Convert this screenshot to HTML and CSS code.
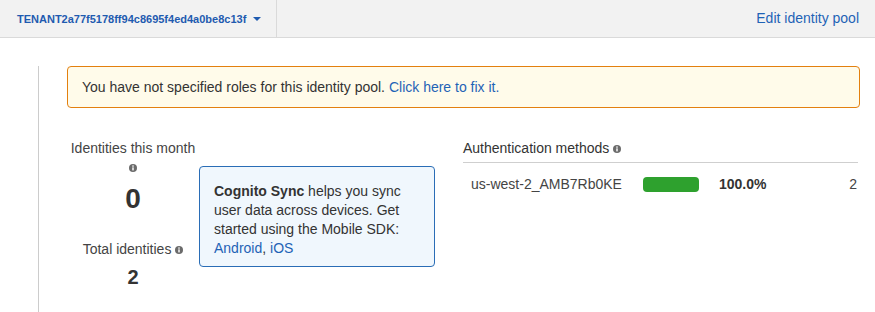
FILE: index.html
```html
<!DOCTYPE html>
<html lang="en">
<head>
    <meta charset="UTF-8">
    <title>Identity pool dashboard</title>
    <link rel="stylesheet" href="styles.css">
</head>
<body>
    <!-- Top bar -->
    <div class="top-bar">
        <div class="pool-select">
            <span class="pool-name">TENANT2a77f5178ff94c8695f4ed4a0be8c13f</span>
            <span class="caret"></span>
        </div>
        <a class="edit-link" href="#">Edit identity pool</a>
    </div>

    <div class="main">
        <div class="alert">
            You have not specified roles for this identity pool. <a href="#">Click here to fix it.</a>
        </div>

        <div class="stats-row">
            <div class="counts">
                <div class="count-label">Identities this month</div>
                <div class="info-row">
                    <svg class="info-icon" viewBox="0 0 10 10"><circle cx="5" cy="5" r="5" fill="#6b6b6b"/><rect x="4.1" y="4.2" width="1.8" height="3.8" fill="#fff"/><circle cx="5" cy="2.6" r="1" fill="#fff"/></svg>
                </div>
                <div class="count-big">0</div>
                <div class="count-label total">Total identities
                    <svg class="info-icon" viewBox="0 0 10 10"><circle cx="5" cy="5" r="5" fill="#6b6b6b"/><rect x="4.1" y="4.2" width="1.8" height="3.8" fill="#fff"/><circle cx="5" cy="2.6" r="1" fill="#fff"/></svg>
                </div>
                <div class="count-small">2</div>
            </div>

            <div class="sync-box">
                <strong>Cognito Sync</strong> helps you sync user data across devices. Get started using the Mobile SDK:
                <a href="#">Android</a>, <a href="#">iOS</a>
            </div>

            <div class="auth">
                <div class="auth-title">Authentication methods
                    <svg class="info-icon" viewBox="0 0 10 10"><circle cx="5" cy="5" r="5" fill="#6b6b6b"/><rect x="4.1" y="4.2" width="1.8" height="3.8" fill="#fff"/><circle cx="5" cy="2.6" r="1" fill="#fff"/></svg>
                </div>
                <div class="auth-row">
                    <span class="auth-name">us-west-2_AMB7Rb0KE</span>
                    <span class="bar-track"><span class="bar-fill" style="width: 100%"></span></span>
                    <span class="auth-pct">100.0%</span>
                    <span class="auth-count">2</span>
                </div>
            </div>
        </div>
    </div>
</body>
</html>
```

FILE: styles.css
```css
* {
    margin: 0;
    padding: 0;
    box-sizing: border-box;
}

body {
    font-family: 'Liberation Sans', Arial, sans-serif;
    font-size: 14px;
    color: #333;
    background: white;
}

a {
    color: #1f63b6;
    text-decoration: none;
}

/* Top bar */
.top-bar {
    display: flex;
    align-items: stretch;
    height: 38px;
    background: #f2f2f2;
    border-bottom: 1px solid #dadada;
}

.pool-select {
    width: 277px;
    display: flex;
    align-items: center;
    padding-left: 17px;
    border-right: 1px solid #dadada;
    color: #1f5bb0;
}

.pool-name {
    font-size: 11px;
    font-weight: bold;
    margin-top: 1px;
}

.caret {
    margin-left: 7px;
    margin-top: 1px;
    border-left: 4px solid transparent;
    border-right: 4px solid transparent;
    border-top: 4px solid #1f5bb0;
}

.edit-link {
    margin-left: auto;
    padding-right: 16px;
    line-height: 36px;
    font-size: 14px;
}

/* Main area */
.main {
    margin-left: 38px;
    margin-top: 28px;
    padding-left: 28px;
    padding-right: 15px;
    border-left: 1px solid #cccccc;
    height: 246px;
}

.alert {
    border: 1px solid #e3800f;
    border-radius: 4px;
    background: #fffbea;
    padding: 11px 14px;
    line-height: 18px;
    color: #333;
}

.stats-row {
    display: flex;
    margin-top: 32px;
}

.counts {
    width: 132px;
    text-align: center;
}

.count-label {
    line-height: 16px;
    color: #444;
}

.info-icon {
    width: 8px;
    height: 8px;
    vertical-align: 0px;
}

.info-row {
    line-height: 12px;
    margin-top: 5px;
}

.count-big {
    font-size: 28px;
    font-weight: bold;
    line-height: 32px;
    margin-top: 10px;
}

.count-label.total {
    margin-top: 26px;
}

.count-small {
    font-size: 20px;
    font-weight: bold;
    line-height: 24px;
    margin-top: 8px;
}

/* Sync callout */
.sync-box {
    width: 236px;
    height: 101px;
    margin-top: 26px;
    border: 1px solid #2a6db6;
    border-radius: 4px;
    background: #f0f7fd;
    padding: 15px 6px 12px 14px;
    line-height: 19px;
    color: #333;
}

/* Authentication methods */
.auth {
    flex: 1;
    margin-left: 28px;
    margin-right: 2px;
}

.auth-title {
    line-height: 16px;
    padding-bottom: 6px;
    border-bottom: 1px solid #cfcfcf;
    color: #333;
}

.auth-row {
    display: flex;
    align-items: center;
    padding: 12px 1px 0 8px;
    line-height: 18px;
}

.auth-name {
    width: 172px;
    color: #444;
}

.bar-track {
    width: 56px;
    height: 15px;
    display: flex;
}

.bar-fill {
    background: #2ea12e;
    border-radius: 4px;
    height: 100%;
}

.auth-pct {
    margin-left: 20px;
    font-weight: bold;
}

.auth-count {
    margin-left: auto;
    color: #444;
}
```
